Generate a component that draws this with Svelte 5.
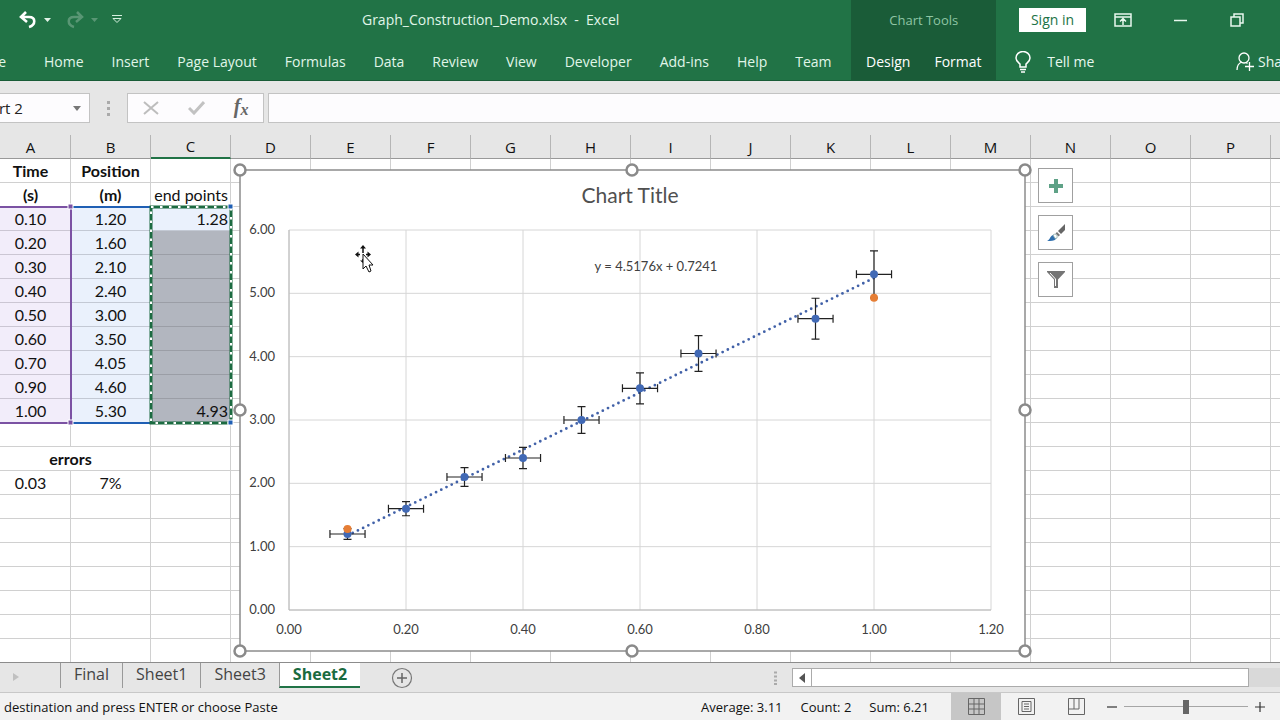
<script>
    // Ribbon tabs that always show, then the ones that belong to the selected chart.
    const tabs = ['Home', 'Insert', 'Page Layout', 'Formulas', 'Data', 'Review', 'View', 'Developer', 'Add-ins', 'Help', 'Team'];
    const chartTabs = ['Design', 'Format'];

    const columns = 'ABCDEFGHIJKLMNOPQ'.split('');
    const rowCount = 21;

    const times = [0.1, 0.2, 0.3, 0.4, 0.5, 0.6, 0.7, 0.9, 1.0];
    const positions = [1.2, 1.6, 2.1, 2.4, 3.0, 3.5, 4.05, 4.6, 5.3];

    const cells = {
        A1: 'Time', B1: 'Position',
        A2: '(s)', B2: '(m)', C2: 'end points',
        C3: '1.28', C11: '4.93',
        A14: '0.03', B14: '7%',
    };
    times.forEach((t, i) => {
        cells['A' + (i + 3)] = t.toFixed(2);
        cells['B' + (i + 3)] = positions[i].toFixed(2);
    });

    // Series and errors for the chart.
    const xError = 0.03;
    const yError = 0.07;
    const points = times.map((t, i) => ({ x: t, y: positions[i] }));
    const endPoints = [{ x: 0.1, y: 1.28 }, { x: 1.0, y: 4.93 }];
    const slope = 4.5176;
    const intercept = 0.7241;
    const fit = (x) => slope * x + intercept;

    // Plot area inside the chart object.
    const px = (v) => 49 + v * 585;
    const py = (v) => 440 - v * (380 / 6);
    const xTicks = [0, 0.2, 0.4, 0.6, 0.8, 1.0, 1.2];
    const yTicks = [0, 1, 2, 3, 4, 5, 6];
    const handles = [[0, 0], [392, 0], [785, 0], [0, 240], [785, 240], [0, 481], [392, 481], [785, 481]];

    const sheets = ['Final', 'Sheet1', 'Sheet3', 'Sheet2'];
    let activeSheet = $state('Sheet2');
    let nameBox = $state('Chart 2');
    let formula = $state('');
    let zoom = $state(50);

    // Shading of the ranges that feed the chart.
    function cellClass(col, row) {
        const classes = [];
        if (row <= 2 && col !== 'C') classes.push('bold');
        if (col === 'C') classes.push('right');
        if (row >= 3 && row <= 11) {
            if (col === 'A') classes.push('range-x');
            if (col === 'B') classes.push('range-y');
            if (col === 'C') classes.push(row === 3 ? 'active' : 'selected');
        }
        return classes.join(' ');
    }
</script>

<div class="window">
    <header>
        <div class="titlebar">
            <div class="quick">
                <button class="icon" aria-label="Undo">
                    <svg width="20" height="18" viewBox="0 0 20 18"><path d="M8 1 3 6l6 5M3 6h8c7 0 7 8 0 10" fill="none" stroke="#fff" stroke-width="2.600" /></svg>
                    <svg width="7" height="4" viewBox="0 0 7 4"><path d="M0 0h7L3.500 4z" fill="#e3f3e9" /></svg>
                </button>
                <button class="icon dim" aria-label="Redo">
                    <svg width="20" height="18" viewBox="0 0 20 18"><path d="M12 1l5 5-6 5M17 6H9c-7 0-7 8 0 10" fill="none" stroke="#fff" stroke-width="2.500" /></svg>
                    <svg width="7" height="4" viewBox="0 0 7 4"><path d="M0 0h7L3.500 4z" fill="#fff" /></svg>
                </button>
                <button class="icon" aria-label="Customize Quick Access Toolbar">
                    <svg width="10" height="9" viewBox="0 0 10 9"><path d="M0 .5h10M1 3.500h8L5 7.500z" fill="none" stroke="#d5f0df" /></svg>
                </button>
            </div>
            <h1>Graph_Construction_Demo.xlsx&nbsp; -&nbsp; Excel</h1>
        </div>
        <div class="context">
            <span>Chart Tools</span>
            <nav>
                {#each chartTabs as tab}
                    <button class="tab">{tab}</button>
                {/each}
            </nav>
        </div>
        <div class="controls">
            <button class="signin">Sign in</button>
            <button class="icon" aria-label="Ribbon Display Options">
                <svg width="18" height="14" viewBox="0 0 18 14"><path d="M1 1h16v12H1zM1 4h16M9 12V6M6 8.500l3-3 3 3" fill="none" stroke="#e8f7ee" stroke-width="1.500" /></svg>
            </button>
            <button class="icon" aria-label="Minimize">
                <svg width="14" height="14" viewBox="0 0 14 14"><path d="M0 7.500h13" stroke="#e8f7ee" stroke-width="1.500" /></svg>
            </button>
            <button class="icon" aria-label="Restore">
                <svg width="14" height="14" viewBox="0 0 14 14"><path d="M1 4h9v9H1zM4 4V1h9v9h-3" fill="none" stroke="#e8f7ee" stroke-width="1.500" /></svg>
            </button>
        </div>
        <nav class="tabs">
            <span class="file"><button class="tab">File</button></span>
            {#each tabs as tab}
                <button class="tab">{tab}</button>
            {/each}
        </nav>
        <div class="help">
            <button class="tab tell">
                <svg width="16" height="22" viewBox="0 0 16 22"><path d="M5 16v-3C3 11 1 10 1 7a7 6.500 0 0 1 14 0c0 3-2 4-4 6v3zM5 18.500h6M6 21h4" fill="none" stroke="#fff" stroke-width="1.500" /></svg>
                Tell me
            </button>
            <button class="tab share">
                <svg width="18" height="19" viewBox="0 0 18 19"><path d="M1 18c0-5 2-7 5-8M10 10.500l1.500 1" fill="none" stroke="#fff" stroke-width="1.300" /><circle cx="8" cy="6" r="5" fill="none" stroke="#fff" stroke-width="1.300" /><path d="M9 14.500h9M13.500 10v9" stroke="#fff" stroke-width="1.300" /></svg>
                Share
            </button>
        </div>
    </header>

    <div class="formula-bar">
        <div class="name-box">
            <input aria-label="Name Box" bind:value={nameBox} />
            <svg width="8" height="5" viewBox="0 0 8 5"><path d="M0 0h8L4 5z" fill="#777" /></svg>
        </div>
        <svg class="grip" width="3" height="15" viewBox="0 0 3 15"><path d="M0 1.500h3M0 7.500h3M0 13.500h3" stroke="#aaa" stroke-width="3" /></svg>
        <div class="entry">
            <button aria-label="Cancel"><svg width="16" height="14" viewBox="0 0 16 14"><path d="M1 1l14 12M15 1 1 13" stroke="#bdbdbd" stroke-width="2" /></svg></button>
            <button aria-label="Enter"><svg width="17" height="14" viewBox="0 0 17 14"><path d="M1 7l5 5L16 1" fill="none" stroke="#c2c2c2" stroke-width="3" /></svg></button>
            <button class="fx" aria-label="Insert Function">f<sub>x</sub></button>
        </div>
        <input class="formula" aria-label="Formula Bar" bind:value={formula} />
    </div>

    <main>
        <table>
            <colgroup>
                {#each columns as col}
                    <col />
                {/each}
            </colgroup>
            <thead>
                <tr>
                    {#each columns as col}
                        <th class:current={col === 'C'}>{col === 'Q' ? '' : col}</th>
                    {/each}
                </tr>
            </thead>
            <tbody>
                {#each { length: rowCount } as _, i}
                    <tr>
                        {#each columns as col}
                            {#if i === 12 && col === 'A'}
                                <td class="bold" colspan="2">errors</td>
                            {:else if i !== 12 || col !== 'B'}
                                <td class={cellClass(col, i + 1)}>{cells[col + (i + 1)] ?? ''}</td>
                            {/if}
                        {/each}
                    </tr>
                {/each}
            </tbody>
        </table>

        <!-- Range outlines and the copy marquee -->
        <svg class="ranges" width="240" height="226" viewBox="0 0 240 226">
            <path d="M71 5h79M71 221h79" stroke="#1f5fb4" stroke-width="2" />
            <path d="M0 5h71v216H0" fill="none" stroke="#7b52a3" stroke-width="2" />
            <rect x="151" y="5" width="80" height="216" fill="none" stroke="#1c6b41" stroke-width="3" />
            <rect x="151" y="5" width="80" height="216" fill="none" stroke="#fff" stroke-width="2" stroke-dasharray="2.500 6.500" />
            <path d="M68 2h5v5h-5zM68 218h5v5h-5z" fill="#7b52a3" stroke="#fff" />
            <path d="M228 2h5v5h-5zM228 218h5v5h-5z" fill="#1f5fb4" stroke="#fff" />
        </svg>

        <svg class="chart" width="786" height="482" viewBox="0 0 786 482" role="img" aria-label="Chart Title">
            <rect class="frame" x="0" y="0" width="785" height="481" />
            {#each yTicks as t}
                <line class="grid" x1={px(0)} x2={px(1.2)} y1={py(t)} y2={py(t)} />
                <text class="label" x="35" y={py(t) + 4} text-anchor="end">{t.toFixed(2)}</text>
            {/each}
            {#each xTicks as t}
                <line class="grid" x1={px(t)} x2={px(t)} y1={py(0)} y2={py(6)} />
                <text class="label" x={px(t)} y="464" text-anchor="middle">{t.toFixed(2)}</text>
            {/each}
            <path class="axis" d="M{px(0)} {py(6)}V{py(0)}H{px(1.2)}" />
            <line class="trend" x1={px(0.1)} y1={py(fit(0.1))} x2={px(1)} y2={py(fit(1))} />
            {#each points as p}
                {@const x1 = px(p.x - xError)}
                {@const x2 = px(p.x + xError)}
                {@const y1 = py(p.y * (1 - yError))}
                {@const y2 = py(p.y * (1 + yError))}
                <path class="error" d="M{x1} {py(p.y)}H{x2}M{x1} {py(p.y) - 4}v8M{x2} {py(p.y) - 4}v8M{px(p.x)} {y1}V{y2}M{px(p.x) - 4} {y1}h8M{px(p.x) - 4} {y2}h8" />
                <circle cx={px(p.x)} cy={py(p.y)} r="4" fill="#4169b5" />
            {/each}
            {#each endPoints as p}
                <circle cx={px(p.x)} cy={py(p.y)} r="4" fill="#e67e35" />
            {/each}
            <text class="title" x="390" y="33" text-anchor="middle">Chart Title</text>
            <text class="label" x="416" y="101" text-anchor="middle">y = {slope}x + {intercept}</text>
            {#each handles as [x, y]}
                <circle class="handle" cx={x} cy={y} r="5.500" />
            {/each}
        </svg>

        <div class="chart-buttons">
            <button aria-label="Chart Elements"><svg width="14" height="14" viewBox="0 0 14 14"><path d="M7 0v14M0 7h14" stroke="#5fa287" stroke-width="4" /></svg></button>
            <button aria-label="Chart Styles">
                <svg width="18" height="17" viewBox="0 0 18 17"><path d="M18 0v6l-4 4-3-3z" fill="#666" /><path d="M10 8l3 3-1.500 1.500-3-3z" fill="#777" /><path d="M0 17c3-1 3-5 6-6 3 0 4 2 3 4-2 2-5 2-9 2z" fill="#2f6fae" /><path d="M6 11c2-2 5 0 4 3l-2 .5z" fill="#fff" stroke="#8aa" stroke-width=".8" /></svg>
            </button>
            <button aria-label="Chart Filters">
                <svg width="18" height="17" viewBox="0 0 18 17"><path d="M0 0h18v1l-7 7.500V17H7V8.500L0 1z" fill="#757575" /><path d="M3 2l5.500 6v7" fill="none" stroke="#fff" /></svg>
            </button>
        </div>

        <svg class="pointer" width="20" height="28" viewBox="0 0 20 28">
            <path d="M8 2v6M2 9.500h3M11 9.500h3M8 14v3" fill="none" stroke="#111" stroke-width="1.500" />
            <path d="M8 0l3 3.500H5zM0 9.500l3.500-3v6zM16 9.500l-3.500-3v6zM5 15.500h3V18z" fill="#111" />
            <path d="M8 9v15l3-3 3 6 2-1-2-6h4z" fill="#fff" stroke="#111" />
        </svg>
    </main>

    <div class="sheet-bar">
        <svg class="next" width="6" height="8" viewBox="0 0 6 8"><path d="M0 0l6 4-6 4z" fill="#c0c0c0" /></svg>
        <nav>
            {#each sheets as sheet}
                <button class:open={sheet === activeSheet} onclick={() => (activeSheet = sheet)}>{sheet}</button>
            {/each}
        </nav>
        <button class="icon add" aria-label="New sheet">
            <svg width="22" height="22" viewBox="0 0 22 22"><circle cx="11" cy="11" r="9.500" fill="none" stroke="#777" stroke-width="1.200" /><path d="M6 11h10M11 6v10" stroke="#666" stroke-width="1.500" /></svg>
        </button>
        <div class="scroll">
            <svg width="3" height="14" viewBox="0 0 3 14"><path d="M0 1.500h3M0 5.500h3M0 9.500h3M0 13h3" stroke="#aaa" stroke-width="2" /></svg>
            <div class="track">
                <button aria-label="Scroll left"><svg width="6" height="10" viewBox="0 0 6 10"><path d="M6 0v10L0 5z" fill="#555" /></svg></button>
                <div class="thumb"></div>
            </div>
        </div>
    </div>

    <footer>
        <span class="message">destination and press ENTER or choose Paste</span>
        <span>Average: 3.11</span>
        <span>Count: 2</span>
        <span>Sum: 6.21</span>
        <div class="views">
            <button class="on" aria-label="Normal"><svg width="17" height="17" viewBox="0 0 17 17"><path d="M.5.5h16v16H.5zM.5 6h16M.5 11h16M6 .5v16M11 .5v16" fill="none" stroke="#666" /></svg></button>
            <button aria-label="Page Layout"><svg width="17" height="17" viewBox="0 0 17 17"><path d="M.5.5h16v16H.5zM4 3.500h9v10H4zM6 6h5M6 8.500h5M6 11h5" fill="none" stroke="#666" /></svg></button>
            <button aria-label="Page Break Preview"><svg width="17" height="17" viewBox="0 0 17 17"><path d="M.5.5h16v16H.5zM.5 11h10.500V.5M6 .5V11" fill="none" stroke="#666" /></svg></button>
        </div>
        <div class="zoom">
            <button aria-label="Zoom out"><svg width="10" height="10" viewBox="0 0 10 10"><path d="M0 5h10" stroke="#333" stroke-width="1.200" /></svg></button>
            <input type="range" min="0" max="100" aria-label="Zoom" bind:value={zoom} />
            <button aria-label="Zoom in"><svg width="10" height="10" viewBox="0 0 10 10"><path d="M0 5h10M5 0v10" stroke="#333" stroke-width="1.200" /></svg></button>
        </div>
    </footer>
</div>

<style>
    :global(body) {
        margin: 0;
        overflow: hidden;
    }

    .window {
        display: flex;
        flex-direction: column;
        height: 100vh;
        overflow: hidden;
        font-family: "Open Sans", "Noto Sans", sans-serif;
        font-size: 14px;
        color: #222;
        background: #e6e6e6;
    }

    button,
    input {
        font: inherit;
        color: inherit;
        border: 0;
        padding: 0;
        margin: 0;
        background: none;
    }

    svg {
        display: block;
        flex: none;
    }

    /* Title bar and ribbon tabs */
    header {
        display: grid;
        grid-template-columns: 3fr 145px 1fr;
        grid-template-rows: 39px 41px;
        background: #217346;
        border-bottom: 1px solid #185c37;
        color: #e0f6e9;
        white-space: nowrap;
    }

    header > * {
        min-width: 0;
    }

    .titlebar {
        display: flex;
        align-items: center;
    }

    .quick {
        display: flex;
        align-items: center;
        gap: 14px;
        padding-left: 18px;
        width: 130px;
        box-sizing: border-box;
    }

    .icon {
        display: flex;
        align-items: center;
        gap: 6px;
    }

    .dim {
        opacity: 0.25;
    }

    h1 {
        flex: 1;
        margin: 0;
        font-size: 14px;
        font-weight: 400;
        text-align: center;
    }

    .context {
        grid-row: 1 / 3;
        grid-column: 2;
        display: grid;
        grid-template-rows: 39px 41px;
        align-items: center;
        justify-items: center;
        background: #1a5c38;
    }

    .context span {
        font-size: 13px;
        color: #8fc5a5;
    }

    .context nav {
        display: flex;
        gap: 24px;
        padding-top: 4px;
        color: #fff;
    }

    .controls {
        display: flex;
        align-items: center;
        justify-content: flex-end;
        gap: 42px;
        padding-right: 36px;
    }

    .signin {
        width: 67px;
        height: 24px;
        margin-right: -14px;
        background: #fff;
        color: #217346;
    }

    .tabs {
        grid-row: 2;
        display: flex;
        align-items: center;
        gap: 28px;
        padding-top: 4px;
    }

    .file {
        display: flex;
        justify-content: flex-end;
        width: 6px;
        margin-right: 10px;
        overflow: hidden;
    }

    .help {
        display: flex;
        align-items: center;
        justify-content: space-between;
        padding: 4px 0 0 19px;
        overflow: hidden;
        color: #e8f8ef;
    }

    .tell,
    .share {
        display: flex;
        align-items: center;
        gap: 16px;
    }

    .share {
        gap: 4px;
        width: 44px;
    }

    /* Formula bar */
    .formula-bar {
        display: flex;
        align-items: center;
        height: 54px;
        gap: 4px;
    }

    .name-box,
    .entry,
    .formula {
        height: 30px;
        box-sizing: border-box;
        background: #fdfcfe;
        border: 1px solid #c3c3c3;
    }

    .name-box {
        display: flex;
        align-items: center;
        width: 130px;
        margin-left: -40px;
        padding-right: 8px;
    }

    .name-box input {
        flex: 1;
        min-width: 0;
        padding-left: 11px;
        font-size: 15px;
    }

    .grip {
        margin: 0 13px;
    }

    .entry {
        display: flex;
        align-items: center;
        justify-content: space-around;
        width: 137px;
    }

    .fx {
        font: italic bold 20px/20px "Liberation Serif", serif;
        color: #666;
    }

    .fx sub {
        font-size: 16px;
        vertical-align: -2px;
    }

    .formula {
        flex: 1;
        border-right: 0;
        padding: 0 8px;
    }

    /* Worksheet, scrolled a little to the right of column A's edge */
    main {
        position: relative;
        flex: 1;
        min-height: 0;
        overflow: hidden;
        background: #fff;
    }

    table {
        width: 1360px;
        margin-left: -9px;
        table-layout: fixed;
        border-collapse: separate;
        border-spacing: 0;
        font-family: Lato, "Open Sans", sans-serif;
        font-size: 16px;
        color: #111;
    }

    col {
        width: 80px;
    }

    th,
    td {
        box-sizing: border-box;
        height: 24px;
        padding: 0;
        border-right: 1px solid #d0d0d0;
        border-bottom: 1px solid #d0d0d0;
        line-height: 22px;
        text-align: center;
        white-space: nowrap;
    }

    th {
        background: #e6e6e6;
        border-color: #b5b5b5;
        border-bottom-color: #999;
        font-family: "Open Sans", "Noto Sans", sans-serif;
        font-size: 15px;
        font-weight: 400;
    }

    th.current {
        border-bottom: 2px solid #217346;
    }

    .bold {
        font-weight: 700;
    }

    .right {
        padding-right: 2px;
        text-align: right;
    }

    .range-x {
        background: #f2edfa;
        border-bottom-color: #cbc6d3;
    }

    .range-y,
    .active {
        background: #eaf1fc;
        border-bottom-color: #c3c9d4;
    }

    .selected {
        background: #b2b6bf;
        border-bottom-color: #9b9ea6;
    }

    .ranges,
    .chart,
    .chart-buttons,
    .pointer {
        position: absolute;
    }

    .ranges {
        left: 0;
        top: 67px;
    }

    .chart {
        left: 240px;
        top: 35px;
        overflow: visible;
        font-family: Lato, "Open Sans", sans-serif;
    }

    .frame {
        fill: #fff;
        stroke: #8c8c8c;
        stroke-width: 1.5;
    }

    .grid {
        stroke: #d6d6d6;
    }

    .axis {
        fill: none;
        stroke: #b8b8b8;
    }

    .trend {
        stroke: #4161a8;
        stroke-width: 2.8;
        stroke-dasharray: 0 5.8;
        stroke-linecap: round;
    }

    .error {
        fill: none;
        stroke: #222;
        stroke-width: 1.2;
    }

    .label {
        fill: #404040;
        font-size: 13px;
    }

    .title {
        fill: #505050;
        font-size: 21px;
    }

    .handle {
        fill: #fff;
        stroke: #8a8a8a;
        stroke-width: 2.5;
    }

    .chart-buttons {
        left: 1038px;
        top: 33px;
        display: grid;
        gap: 12px;
    }

    .chart-buttons button {
        display: grid;
        place-items: center;
        width: 35px;
        height: 35px;
        background: #fff;
        border: 1px solid #a0a0a0;
    }

    .pointer {
        left: 355px;
        top: 110px;
    }

    /* Sheet tabs */
    .sheet-bar {
        display: flex;
        height: 29px;
        border-top: 1px solid #8c8c8c;
        border-bottom: 1px solid #c8c8c8;
    }

    .next {
        margin: 10px 41px 0 13px;
    }

    .sheet-bar nav {
        display: flex;
        height: 25px;
    }

    .sheet-bar nav button {
        padding: 0 13px 3px;
        border-left: 1px solid #999;
        font-size: 16px;
        line-height: 22px;
        color: #444;
    }

    .sheet-bar nav button.open {
        padding-bottom: 1px;
        background: #fff;
        border-bottom: 2px solid #217346;
        color: #1a6b3f;
        font-weight: 700;
    }

    .add {
        margin-left: 31px;
    }

    .scroll {
        display: flex;
        align-items: center;
        gap: 15px;
        width: 506px;
        margin-left: auto;
    }

    .track {
        display: flex;
        flex: 1;
        height: 19px;
        background: #d9d9d9;
    }

    .track button {
        display: grid;
        place-items: center;
        width: 20px;
        box-sizing: border-box;
        background: #fff;
        border: 1px solid #ababab;
    }

    .thumb {
        flex: 1;
        margin-right: 31px;
        background: #fff;
        border: 1px solid #ababab;
        border-left: 0;
    }

    /* Status bar */
    footer {
        display: flex;
        align-items: center;
        height: 27px;
        gap: 18px;
        background: #f2f2f2;
        font-size: 13px;
        color: #111;
        white-space: nowrap;
    }

    .message {
        flex: 1;
        padding-left: 4px;
    }

    .views {
        display: flex;
        align-self: stretch;
        margin-left: 4px;
    }

    .views button {
        display: grid;
        place-items: center;
        width: 50px;
    }

    .views .on {
        background: #c6c6c6;
    }

    .zoom {
        display: flex;
        align-items: center;
        gap: 7px;
        margin: 0 15px 0 -12px;
    }

    .zoom input {
        appearance: none;
        width: 124px;
        height: 16px;
        background: linear-gradient(#a6a6a6, #a6a6a6) center / 100% 1px no-repeat;
    }

    .zoom input::-webkit-slider-thumb {
        appearance: none;
        width: 6px;
        height: 14px;
        background: #666;
    }
</style>
